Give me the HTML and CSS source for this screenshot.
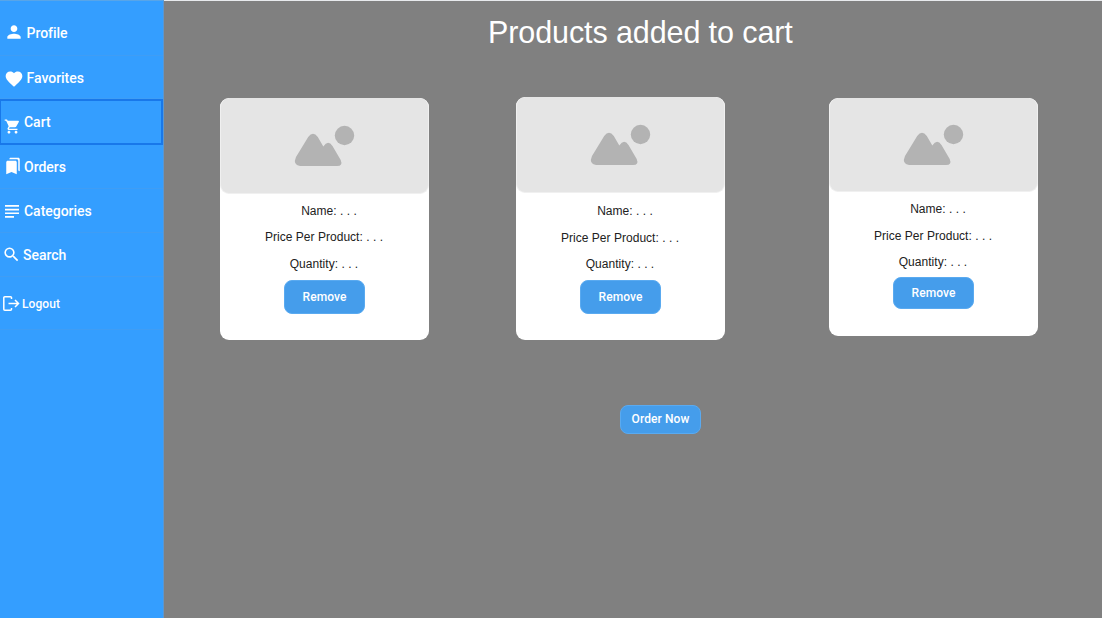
FILE: index.html
```html
<!DOCTYPE html>
<html lang="en">
<head>
<meta charset="utf-8">
<title>Cart</title>
<link rel="stylesheet" href="styles.css">
</head>
<body>
<svg class="defs" width="0" height="0" aria-hidden="true">
  <symbol id="placeholder" viewBox="0 0 209 95">
    <path fill="#b3b3b3" d="M76 59 88.200 39Q93 32.500 97.800 39L103.300 48.500Q108 41.500 112.500 48L120.700 62Q123.200 68 117 68H80Q72.500 67 76 59Z"/>
    <circle cx="124.500" cy="37.500" r="9.700" fill="#b3b3b3"/>
  </symbol>
</svg>
<div class="app">
  <nav class="sidebar">
    <a class="item profile"><svg width="20" height="20" viewBox="0 0 24 24"><path d="M12 12c2.210 0 4-1.790 4-4s-1.790-4-4-4-4 1.790-4 4 1.790 4 4 4zm0 2c-2.670 0-8 1.340-8 4v2h16v-2c0-2.660-5.330-4-8-4z"/></svg><span>Profile</span></a>
    <a class="item favorites"><svg width="20" height="20" viewBox="0 0 24 24"><path d="m12 21.350-1.450-1.320C5.400 15.360 2 12.280 2 8.500 2 5.420 4.420 3 7.500 3c1.740 0 3.410.81 4.500 2.090C13.090 3.810 14.760 3 16.500 3 19.580 3 22 5.420 22 8.500c0 3.780-3.400 6.860-8.550 11.540L12 21.350z"/></svg><span>Favorites</span></a>
    <a class="item cart"><svg width="17" height="17" viewBox="0 0 24 24"><path d="M7 18c-1.100 0-1.990.9-1.990 2S5.900 22 7 22s2-.9 2-2-.9-2-2-2zM1 2v2h2l3.600 7.590-1.350 2.450c-.16.28-.25.61-.25.96 0 1.100.9 2 2 2h12v-2H7.420c-.14 0-.25-.11-.25-.25l.03-.12.9-1.630h7.450c.75 0 1.410-.41 1.750-1.030l3.580-6.490A1 1 0 0 0 20 4H5.210l-.94-2H1zm16 16c-1.100 0-1.990.9-1.990 2s.89 2 1.990 2 2-.9 2-2-.9-2-2-2z"/></svg><span>Cart</span></a>
    <a class="item orders"><svg width="18" height="18" viewBox="0 0 24 24"><path d="m19 18 2 1V3c0-1.100-.9-2-2-2H8.990C7.890 1 7 1.900 7 3h10c1.100 0 2 .9 2 2v13zM15 5H5c-1.100 0-2 .9-2 2v16l7-3 7 3V7c0-1.100-.9-2-2-2z"/></svg><span>Orders</span></a>
    <a class="item categories"><svg width="14" height="13" viewBox="0 0 14 13"><path d="M0 0h14v1.700H0zM0 3.700h14v1.700H0zM0 7.400h14v1.700H0zM0 11h9v1.700H0z"/></svg><span>Categories</span></a>
    <a class="item search"><svg width="19" height="19" viewBox="0 0 24 24"><path d="M15.500 14h-.79l-.28-.27A6.471 6.471 0 0 0 16 9.500 6.500 6.500 0 1 0 9.500 16c1.610 0 3.090-.59 4.230-1.570l.27.28v.79l5 4.990L20.490 19l-4.990-5zm-6 0C7.010 14 5 11.990 5 9.500S7.010 5 9.500 5 14 7.010 14 9.500 11.990 14 9.500 14z"/></svg><span>Search</span></a>
    <a class="item logout"><svg width="17" height="15" viewBox="0 0 17 15"><path class="line" d="M8.500 3V1.800Q8.500.8 7.500.8H1.800Q.8.800.8 1.800V13.200Q.8 14.200 1.800 14.200H7.500Q8.500 14.200 8.500 13.200V12M5.500 7.500H15.500M12 4 15.500 7.500 12 11"/></svg><span>Logout</span></a>
  </nav>
  <main class="main">
    <h1 class="title">Products added to cart</h1>
    <section class="cards">
      <article class="card first">
        <div class="picture"><svg width="209" height="95"><use href="#placeholder"/></svg></div>
        <p>Name: . . .</p><p>Price Per Product: . . .</p><p>Quantity: . . .</p>
        <button class="remove">Remove</button>
      </article>
      <article class="card second">
        <div class="picture"><svg width="209" height="95"><use href="#placeholder"/></svg></div>
        <p>Name: . . .</p><p>Price Per Product: . . .</p><p>Quantity: . . .</p>
        <button class="remove">Remove</button>
      </article>
      <article class="card third">
        <div class="picture"><svg width="209" height="95"><use href="#placeholder"/></svg></div>
        <p>Name: . . .</p><p>Price Per Product: . . .</p><p>Quantity: . . .</p>
        <button class="remove">Remove</button>
      </article>
    </section>
    <button class="order">Order Now</button>
  </main>
</div>
</body>
</html>
```
FILE: styles.css
```css
* { box-sizing: border-box; }
body { margin: 0; background: #808080; font-family: "Liberation Sans", Arial, sans-serif; }
.defs { display: none; }
.app { display: flex; height: 618px; overflow: hidden; }

.sidebar {
  width: 164px;
  flex: none;
  padding-top: 10px;
  background: #349eff;
  border-top: 1px solid #58a5e8;
  border-right: 1px solid #5c97d0;
}
.item {
  display: flex;
  align-items: center;
  height: 44px;
  border-bottom: 1px solid #3f9df5;
  color: #fff;
  font: 500 14px/20px Roboto, sans-serif;
  letter-spacing: -0.02px;
  white-space: nowrap;
}
.item svg { flex: none; fill: #fff; }
.profile { height: 45px; padding-left: 4px; }
.profile svg { margin: 0 2.500px 2px 0; }
.favorites { height: 43px; padding: 2px 0 0 4px; }
.favorites svg { margin: 1px 2.500px 0 0; }
.cart { height: 46px; padding-left: 3px; border: 2px solid #1878ea; border-left-width: 1px; width: 163px; }
.cart svg { margin: 8px 3px 0 0; width: 17px; }
.cart span { margin-bottom: 1px; }
.orders { padding-left: 4px; }
.orders svg { margin: 0 2px 1px 0; }
.categories { padding-left: 5px; }
.categories svg { margin: 1px 5px 0 0; }
.search { padding-left: 2px; }
.search svg { margin-right: 2px; }
.logout { height: 53px; padding: 1px 0 0 3px; font-size: 12px; letter-spacing: 0.08px; }
.logout svg { margin: 0 2px 0 0; }
.line { fill: none; stroke: #fff; stroke-width: 1.5; }

.main {
  flex: 1;
  display: flex;
  flex-direction: column;
  border-top: 1px solid #e8eaed;
}
.title {
  margin: 13px 0 0 324px;
  height: 83px;
  color: #fff;
  font-size: 30.5px;
  font-weight: 400;
  letter-spacing: -0.1px;
  line-height: 36px;
}
.cards { display: flex; align-items: flex-start; height: 243px; padding-left: 56px; }
.card {
  width: 209px;
  height: 242px;
  overflow: hidden;
  border-radius: 9px;
  background: #fff;
  display: flex;
  flex-direction: column;
  align-items: center;
}
.picture {
  width: 209px;
  height: 96px;
  flex: none;
  margin-bottom: 4px;
  border: solid #f0f0f0;
  border-width: 0 1px 1px;
  border-radius: 9px;
  background: #e5e5e5;
  overflow: hidden;
}
.picture svg { display: block; margin-left: -1px; }
.card p {
  margin: 0 0 0 9px;
  height: 26.500px;
  color: #212121;
  font-size: 12px;
  letter-spacing: 0.03px;
  line-height: 26px;
  white-space: nowrap;
}
.card p + p { margin-left: -1px; }
.first { margin-top: 1px; }
.first p:nth-of-type(2) { line-height: 25px; }
.second { margin-left: 87px; height: 243px; }
.second .picture { margin-bottom: 5px; }
.second p:nth-of-type(3) { line-height: 27px; }
.third { margin: 1px 0 0 104px; height: 238px; }
.third .picture { height: 94px; margin-bottom: 4px; }
.third svg { margin-top: -1px; }
.remove, .order {
  width: 81px;
  height: 33px;
  flex: none;
  padding: 0;
  border: 1px solid #5aaaf0;
  border-radius: 8px;
  background: #459deb;
  color: #fff;
  font: 500 12px/16px Roboto, sans-serif;
  letter-spacing: 0.08px;
}
.remove { margin-top: 2px; height: 34px; }
.third .remove { height: 32px; margin-top: 1px; }
.order { height: 29px; margin: 65px 0 0 456px; padding-bottom: 2px; }
```
